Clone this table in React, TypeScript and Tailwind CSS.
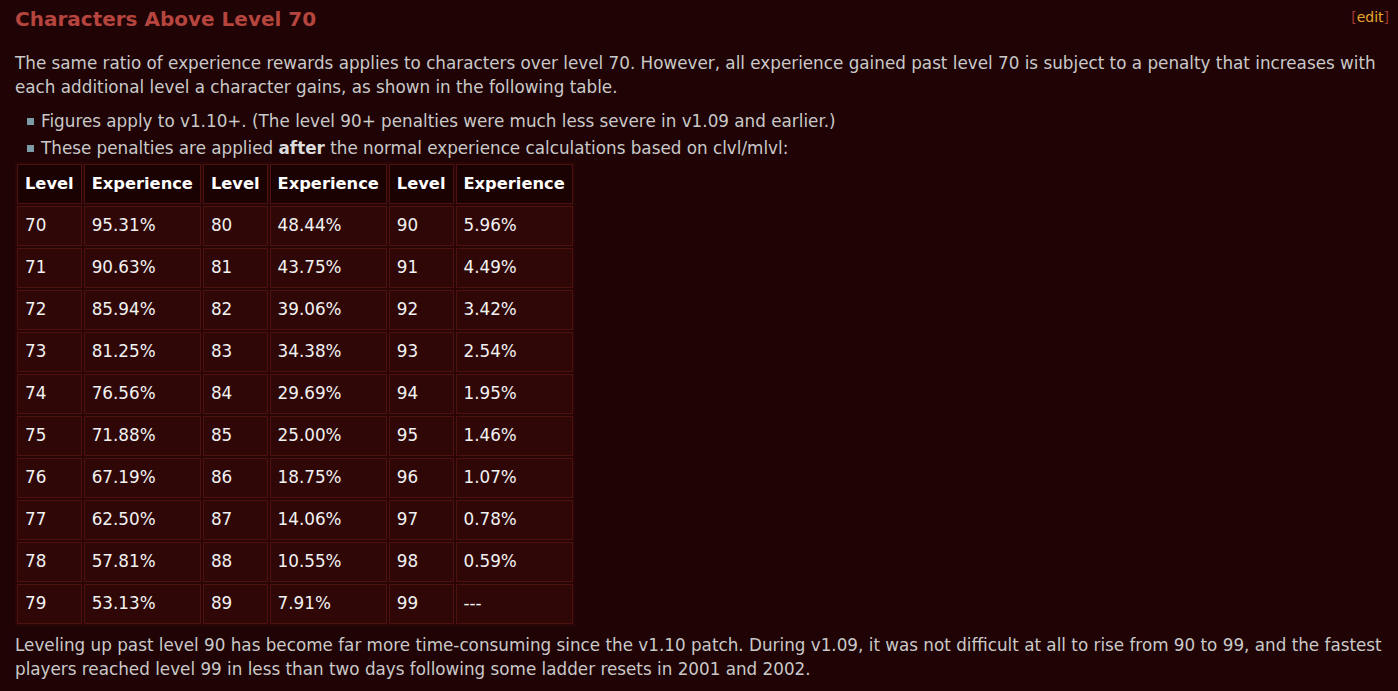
import React from 'react';

const rows: [string, string, string, string, string, string][] = [
  ['70', '95.31%', '80', '48.44%', '90', '5.96%'],
  ['71', '90.63%', '81', '43.75%', '91', '4.49%'],
  ['72', '85.94%', '82', '39.06%', '92', '3.42%'],
  ['73', '81.25%', '83', '34.38%', '93', '2.54%'],
  ['74', '76.56%', '84', '29.69%', '94', '1.95%'],
  ['75', '71.88%', '85', '25.00%', '95', '1.46%'],
  ['76', '67.19%', '86', '18.75%', '96', '1.07%'],
  ['77', '62.50%', '87', '14.06%', '97', '0.78%'],
  ['78', '57.81%', '88', '10.55%', '98', '0.59%'],
  ['79', '53.13%', '89', '7.91%', '99', '---'],
];

const headers = ['Level', 'Experience', 'Level', 'Experience', 'Level', 'Experience'];

export default function App() {
  return (
    <div
      className="min-h-[691px] bg-[#200304] pl-[15px] pr-[9px] pt-[6px] text-[16.8px] text-[#c9c9c9]"
      style={{ fontFamily: '"DejaVu Sans", Verdana, sans-serif' }}
    >
      <div className="flex items-start justify-between">
        <h2 className="text-[20px] font-bold leading-[26px] text-[#b5453e]">Characters Above Level 70</h2>
        <span className="mt-[1px] text-[14px] text-[#a33a34]">
          [<span className="text-[#e6a82c]">edit</span>]
        </span>
      </div>

      <p className="mt-[19px] pr-[6px] leading-[24px]">
        The same ratio of experience rewards applies to characters over level 70. However, all experience gained past
        level 70 is subject to a penalty that increases with each additional level a character gains, as shown in the
        following table.
      </p>

      <ul className="mt-[9px] pl-[12px]">
        <li className="flex items-center gap-[7px] leading-[27px]">
          <span className="h-[7px] w-[7px] bg-[#7c9ba6]" />
          Figures apply to v1.10+. (The level 90+ penalties were much less severe in v1.09 and earlier.)
        </li>
        <li className="flex items-center gap-[7px] leading-[27px]">
          <span className="h-[7px] w-[7px] bg-[#7c9ba6]" />
          <span>
            These penalties are applied <b className="text-[#dcdcdc]">after</b> the normal experience calculations
            based on clvl/mlvl:
          </span>
        </li>
      </ul>

      <table className="border-separate border-spacing-[2px] bg-[#2a0505]">
        <thead>
          <tr>
            {headers.map((h, i) => (
              <th
                key={i}
                className="h-[40px] border border-[#4d1210] bg-[#1a0202] px-[7px] text-left text-[16.3px] font-bold text-white"
              >
                {h}
              </th>
            ))}
          </tr>
        </thead>
        <tbody>
          {rows.map((r) => (
            <tr key={r[0]}>
              {r.map((c, i) => (
                <td key={i} className="h-[40px] border border-[#4d1210] bg-[#2f0707] px-[7px] text-[#f2f2f2]">
                  {c}
                </td>
              ))}
            </tr>
          ))}
        </tbody>
      </table>

      <p className="mt-[7px] pr-[4px] leading-[24px]">
        Leveling up past level 90 has become far more time-consuming since the v1.10 patch. During v1.09, it was not
        difficult at all to rise from 90 to 99, and the fastest players reached level 99 in less than two days
        following some ladder resets in 2001 and 2002.
      </p>
    </div>
  );
}
